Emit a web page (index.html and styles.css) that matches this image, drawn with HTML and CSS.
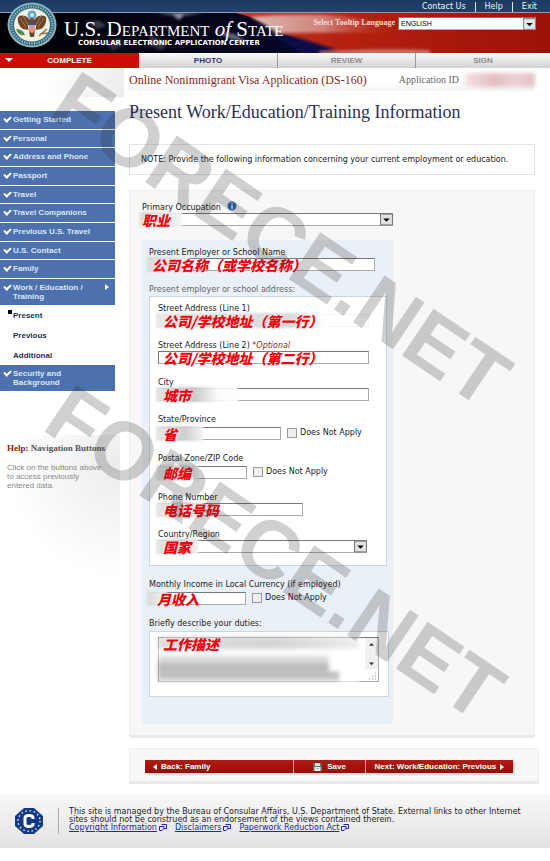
FILE: index.html
```html
<!DOCTYPE html>
<html lang="en">
<head>
<meta charset="utf-8">
<title>Online Nonimmigrant Visa Application (DS-160)</title>
<link rel="stylesheet" href="styles.css">
</head>
<body>
<div class="page">
  <nav class="topbar">
    <a href="#">Contact Us</a><a href="#">Help</a><a href="#">Exit</a>
  </nav>
  <header class="banner">
    <svg class="banner-art" viewBox="0 0 550 40" preserveAspectRatio="none" aria-hidden="true">
      <defs>
        <linearGradient id="night" x1="0" x2="1"><stop offset="0" stop-color="#000004"/><stop offset=".35" stop-color="#050518"/><stop offset="1" stop-color="#0a0a50"/></linearGradient>
        <linearGradient id="stripe" x1="0" x2="1"><stop offset="0" stop-color="#c23a2c"/><stop offset=".35" stop-color="#b5200f"/><stop offset="1" stop-color="#9c1208"/></linearGradient>
        <linearGradient id="pale" x1="0" x2="1"><stop offset="0" stop-color="#d9b9b4"/><stop offset=".5" stop-color="#d08078"/><stop offset="1" stop-color="#b5200f" stop-opacity="0"/></linearGradient>
        <filter id="soft"><feGaussianBlur stdDeviation="1.5"/></filter>
      </defs>
      <rect width="550" height="40" fill="url(#night)"/>
      <g filter="url(#soft)" fill="#8f92a8">
        <path d="M155 0l18 2 6 5 5-5 20-2z"/><path d="M85 8l14 0 8 5-10 3z" opacity=".4"/>
        <path d="M215 18l20 3 14 9-18-4z" opacity=".7"/><path d="M150 22l18 8-6 7-14-5z" opacity=".35"/><path d="M105 28l16-3 3 8-12 5z" opacity=".3"/>
      </g>
      <path d="M236 0H550V40H340Q300 28 282 20Q262 6 236 0Z" fill="url(#stripe)"/>
      <g filter="url(#soft)">
        <path d="M250 4Q300 0 345 3L400 12V20Q340 19 276 20Q264 10 250 4Z" fill="url(#pale)"/>
        <path d="M276 20Q300 24 345 40H300Q286 30 270 20Z" fill="#0b0c48"/>
        <path d="M320 39Q370 35 430 37V41H320Z" fill="#c9776c"/>
      </g>
    </svg>
    <svg class="seal" viewBox="0 0 50 46" aria-hidden="true">
      <ellipse cx="25" cy="23" rx="24.500" ry="22.500" fill="#8fb3bd"/>
      <ellipse cx="25" cy="23" rx="22.500" ry="20.500" fill="#2f6d84"/>
      <ellipse cx="25" cy="23" rx="20.500" ry="18.500" fill="none" stroke="#bcd0cd" stroke-width="2" stroke-dasharray="1 1.500"/>
      <ellipse cx="25" cy="23" rx="18" ry="16.500" fill="#f1f0e4"/>
      <circle cx="25" cy="13" r="4.500" fill="#5ea6cf"/><circle cx="25" cy="13" r="2" fill="#e3edf0"/>
      <path d="M23 18Q17 11 11 15Q10 23 16 27L22 28L23 35H27L28 28L34 27Q40 23 39 15Q33 11 27 18L26 16H24Z" fill="#6d4526"/>
      <path d="M13 16L19 25M16 14L21 23M37 16L31 25M34 14L29 23" stroke="#a77d4b" stroke-width="1"/>
      <path d="M21 20H29V26Q28 30 25 31Q22 30 21 26Z" fill="#f4e6e2"/><path d="M21 20H29V23H21Z" fill="#344f87"/>
      <path d="M23 23V30M25 23V31M27 23V30" stroke="#c5453b" stroke-width="1"/>
      <path d="M9 27Q11 34 18 33Q16 27 9 27Z" fill="#4e8a4a"/><path d="M32 34L40 27M33 32L41 31" stroke="#8c7c55" stroke-width="1.500"/>
    </svg>
    <div class="brand">
      <h1>U.S. Department <em>of</em> State</h1>
      <p>CONSULAR ELECTRONIC APPLICATION CENTER</p>
    </div>
    <div class="language">
      <label for="lang">Select Tooltip Language</label>
      <span class="select">
        <select id="lang"><option>ENGLISH</option></select>
        <svg viewBox="0 0 12 11" aria-hidden="true"><rect x=".5" y=".5" width="11" height="10" fill="#e6e6e6" stroke="#888"/><path d="M3 4.500H9L6 7.500Z" fill="#000"/></svg>
      </span>
    </div>
  </header>
  <ol class="steps">
    <li class="current"><svg viewBox="0 0 8 4" aria-hidden="true"><path d="M0 0H8L4 4Z" fill="#fff"/></svg>COMPLETE</li>
    <li class="next">PHOTO</li><li>REVIEW</li><li>SIGN</li>
  </ol>

  <div class="columns">
    <aside class="sidebar">
      <div class="fade"></div>
      <ul class="menu">
        <li><a href="#">Getting Started</a></li>
        <li><a href="#">Personal</a></li>
        <li><a href="#">Address and Phone</a></li>
        <li><a href="#">Passport</a></li>
        <li><a href="#">Travel</a></li>
        <li><a href="#">Travel Companions</a></li>
        <li><a href="#">Previous U.S. Travel</a></li>
        <li><a href="#">U.S. Contact</a></li>
        <li><a href="#">Family</a></li>
      </ul>
      <div class="menu wide"><a href="#" class="open">Work / Education / Training</a></div>
      <ul class="submenu">
        <li class="here"><a href="#">Present</a></li>
        <li><a href="#">Previous</a></li>
        <li><a href="#">Additional</a></li>
      </ul>
      <div class="menu wide"><a href="#">Security and Background</a></div>
      <section class="help">
        <h3><b>Help:</b> Navigation Buttons</h3>
        <p>Click on the buttons above to access previously entered data.</p>
      </section>
    </aside>

    <main>
      <div class="appbar">
        <h2>Online Nonimmigrant Visa Application (DS-160)</h2>
        <span>Application ID</span><i class="hidden-id"></i>
      </div>
      <h2 class="title">Present Work/Education/Training Information</h2>
      <p class="note">NOTE: Provide the following information concerning your current employment or education.</p>

      <form id="work" class="panel">
        <div class="field">
          <label for="occ">Primary Occupation</label>
          <svg class="info" viewBox="0 0 10 10" aria-hidden="true"><circle cx="5" cy="5" r="5" fill="#9dbbe0"/><circle cx="5" cy="5" r="4" fill="#2c62b4"/><path d="M5 4.300V8M5 2V3.300" stroke="#fff" stroke-width="1.400"/></svg>
          <div class="control select full">
            <select id="occ"><option></option></select>
            <svg viewBox="0 0 12 11" aria-hidden="true"><rect x=".5" y=".5" width="11" height="10" fill="#e2e2e2" stroke="#777"/><path d="M3 4.500H9L6 7.500Z" fill="#000"/></svg>
            <i class="smudge pale w40"></i><span class="mark edge">职业</span>
          </div>
        </div>

        <div class="block">
          <div class="field">
            <label for="emp">Present Employer or School Name</label>
            <div class="control"><input id="emp" class="w226" type="text"><i class="smudge pale w40"></i><span class="mark near">公司名称（或学校名称）</span></div>
          </div>
          <p class="legend">Present employer or school address:</p>
          <div class="address">
            <div class="field">
              <label for="s1">Street Address (Line 1)</label>
              <div class="control"><input id="s1" class="w211 covered" type="text"><i class="smudge w160"></i><span class="mark">公司/学校地址（第一行）</span></div>
            </div>
            <div class="field">
              <label for="s2">Street Address (Line 2) <em>*Optional</em></label>
              <div class="control"><input id="s2" class="w211" type="text"><span class="mark">公司/学校地址（第二行）</span></div>
            </div>
            <div class="field">
              <label for="city">City</label>
              <div class="control"><input id="city" class="w211" type="text"><i class="smudge w80"></i><span class="mark">城市</span></div>
            </div>
            <div class="field">
              <label for="state">State/Province</label>
              <div class="control row"><input id="state" class="w123" type="text"><i class="smudge w45"></i><span class="mark">省</span>
                <label class="tick"><input type="checkbox">Does Not Apply</label></div>
            </div>
            <div class="field">
              <label for="zip">Postal Zone/ZIP Code</label>
              <div class="control row"><input id="zip" class="w89" type="text"><i class="smudge w40"></i><span class="mark">邮编</span>
                <label class="tick"><input type="checkbox">Does Not Apply</label></div>
            </div>
            <div class="field">
              <label for="phone">Phone Number</label>
              <div class="control"><input id="phone" class="w145" type="text"><i class="smudge w45"></i><span class="mark">电话号码</span></div>
            </div>
            <div class="field">
              <label for="country">Country/Region</label>
              <div class="control select w209">
                <select id="country"><option></option></select>
                <svg viewBox="0 0 12 11" aria-hidden="true"><rect x=".5" y=".5" width="11" height="10" fill="#e2e2e2" stroke="#777"/><path d="M3 4.500H9L6 7.500Z" fill="#000"/></svg>
                <i class="smudge w40"></i><span class="mark">国家</span>
              </div>
            </div>
          </div>
          <div class="field">
            <label for="income">Monthly Income in Local Currency (if employed)</label>
            <div class="control row"><input id="income" class="w97" type="text"><i class="smudge pale w20"></i><span class="mark far">月收入</span>
              <label class="tick"><input type="checkbox">Does Not Apply</label></div>
          </div>
          <label for="duties">Briefly describe your duties:</label>
          <div class="duties">
            <div class="control">
              <textarea id="duties"></textarea>
              <div class="hidden-text"><i></i><i></i><i></i></div>
              <svg class="scroll" viewBox="0 0 13 44" aria-hidden="true"><rect width="13" height="32" fill="#f0f0f0"/><path d="M4 8L6.500 5L9 8ZM4 25H9L6.500 28Z" fill="#333"/><path d="M10 36h1M7 39h1M10 39h1M4 42h1M7 42h1M10 42h1" stroke="#999"/></svg>
              <span class="mark">工作描述</span>
            </div>
          </div>
        </div>
      </form>

      <div class="actions">
        <div class="bar">
          <button type="button" class="back"><svg viewBox="0 0 4 6" aria-hidden="true"><path d="M4 0V6L0 3Z" fill="#fff"/></svg>Back: Family</button>
          <button type="submit" form="work" class="save"><svg viewBox="0 0 9 8" aria-hidden="true"><path d="M0 0H8L9 1V8H0Z" fill="#5d6c68"/><rect x="2" width="5" height="3" fill="#d7e6dc"/><rect x="1.500" y="4" width="6" height="4" fill="#f3f3f3"/><path d="M3 5.500H6" stroke="#888" stroke-width=".7"/></svg>Save</button>
          <button type="button" class="forward">Next: Work/Education: Previous<svg viewBox="0 0 4 6" aria-hidden="true"><path d="M0 0V6L4 3Z" fill="#fff"/></svg></button>
        </div>
      </div>
    </main>
  </div>

  <footer>
    <svg class="emblem" viewBox="0 0 28 26" aria-hidden="true">
      <path d="M9 0H19L28 8V18L19 26H9L0 18V8Z" fill="#143a84"/>
      <ellipse cx="14" cy="13" rx="11" ry="10.300" fill="none" stroke="#d5def0" stroke-width="1.500" stroke-dasharray="1.500 2.700"/>
      <path d="M18 11V10Q18 7.500 14 7.500Q10 7.500 10 10V16Q10 18.500 14 18.500Q18 18.500 18 16V15" fill="none" stroke="#fff" stroke-width="3"/>
    </svg>
    <div class="legal">
      <p>This site is managed by the Bureau of Consular Affairs, U.S. Department of State. External links to other Internet sites should not be construed as an endorsement of the views contained therein.</p>
      <p class="links">
        <a href="#">Copyright Information<svg viewBox="0 0 8 7"><path d="M2.500 .5H7.500V4.500H5L3 6.500H.5V2.500H5V5" fill="none" stroke="#22b"/></svg></a>
        <a href="#">Disclaimers<svg viewBox="0 0 8 7"><path d="M2.500 .5H7.500V4.500H5L3 6.500H.5V2.500H5V5" fill="none" stroke="#22b"/></svg></a>
        <a href="#">Paperwork Reduction Act<svg viewBox="0 0 8 7"><path d="M2.500 .5H7.500V4.500H5L3 6.500H.5V2.500H5V5" fill="none" stroke="#22b"/></svg></a>
      </p>
    </div>
  </footer>
  <div class="watermark upper" aria-hidden="true">FORECE.NET</div>
  <div class="watermark lower" aria-hidden="true">FORECE.NET</div>
</div>
</body>
</html>
```
FILE: styles.css
```css
* { box-sizing: border-box; }
body {
  margin: 0;
  background: #fff;
  color: #222;
  font: 8px/10px "DejaVu Sans", sans-serif;
}
h1, h2, h3, p, ul, ol { margin: 0; padding: 0; list-style: none; }
svg { display: block; }
input, select, textarea, button { font: inherit; margin: 0; border-radius: 0; }
.page { position: relative; overflow: hidden; }

/* top of page */
.topbar {
  display: flex;
  justify-content: flex-end;
  height: 13px;
  padding: 2px 4px 0 0;
  background: linear-gradient(#1d3a63, #24406b);
  border-bottom: 1px solid #8d9bb0;
}
.topbar a { color: #f0f4fa; text-decoration: none; padding: 0 9px; line-height: 10px; }
.topbar a + a { border-left: 1px solid #e0e5ee; }
.banner {
  position: relative;
  display: flex;
  justify-content: space-between;
  align-items: flex-start;
  height: 40px;
  background: #000;
}
.banner-art { position: absolute; inset: 0; width: 100%; height: 100%; }
.seal { position: absolute; left: 7px; top: -11px; width: 50px; height: 46px; }
.brand { position: relative; padding: 6px 0 0 64px; color: #fff; white-space: nowrap; }
.brand h1 { font: 400 21px/20px "Liberation Serif", serif; font-variant: small-caps; }
.brand h1 em { font-variant: normal; }
.brand p { padding-left: 14px; font: 700 7px/8px "DejaVu Sans", sans-serif; }
.language {
  position: relative;
  display: flex;
  gap: 3px;
  padding: 4px 14px 0 0;
  color: #f6dcd6;
  white-space: nowrap;
}
.language label { font: 700 8px/12px "Liberation Serif", serif; }
.language .select { width: 138px; }
.language select { height: 14px; padding: 0 2px 3px; border-color: #888; font: 7px/9px "Liberation Sans", sans-serif; }
.language .select svg { height: 14px; }

.steps {
  display: grid;
  grid-template-columns: 139fr 139fr 138fr 134fr;
  height: 15px;
  background: linear-gradient(#fafafa, #d2d2d2);
  font: 700 8px/15px "Liberation Sans", sans-serif;
  color: #8c8c8c;
  text-align: center;
}
.steps li { position: relative; border-right: 1px solid #999; }
.steps li:last-child { border-right: 0; }
.steps .current { background: #cc0d06; color: #fff; border-right: 0; }
.steps .next { color: #2b376b; }
.steps svg { position: absolute; left: 5px; top: 5px; width: 8px; height: 4px; }

/* sidebar */
.columns { display: grid; grid-template-columns: 124px 1fr; }
.sidebar { font: 700 8px/9px "Liberation Sans", sans-serif; }
.fade { height: 29px; margin-bottom: 14px; background: linear-gradient(100deg, #fff 40%, #ececec); }
.menu { margin-right: 9px; }
ul.menu { display: grid; grid-auto-rows: 1fr; gap: 1px; min-height: 167px; margin-bottom: 1px; }
.menu li { display: grid; }
.menu a {
  position: relative;
  display: block;
  padding: 4px 24px 4px 13px;
  background: #4c71ae;
  color: #dce6f5;
  text-decoration: none;
}
ul.menu a { padding-right: 0; }
.menu a::before {
  content: "";
  position: absolute;
  left: 4px;
  top: 5px;
  width: 5px;
  height: 3px;
  border: solid #fff;
  border-width: 0 0 2px 2px;
  transform: rotate(-45deg);
}
.menu .open::after {
  content: "";
  position: absolute;
  right: 6px;
  top: 5px;
  border: solid transparent;
  border-width: 3px 0 3px 4px;
  border-left-color: #fff;
}
.submenu { margin-right: 9px; }
.submenu li { position: relative; padding: 6px 0 5px 13px; }
.submenu a { color: #253058; text-decoration: none; }
.submenu .here::before { content: ""; position: absolute; left: 8px; top: 5px; width: 4px; height: 4px; background: #000; }
.help {
  margin: 44px 4px 0 0;
  padding: 8px 14px 100px 7px;
  background: radial-gradient(circle at 100% 20%, #ececec, #fff 65%);
}
.help h3 { font: 700 9px/10px "Liberation Serif", serif; color: #555; padding-bottom: 10px; white-space: nowrap; }
.help b { color: #8c1a14; }
.help p { font-weight: 400; color: #888; }

/* main column */
main { padding: 0 15px 0 5px; min-width: 0; }
.appbar {
  display: flex;
  align-items: center;
  height: 23px;
  color: #666;
  font: 10px/12px "Liberation Serif", serif;
  background: linear-gradient(#fff 60%, #f5f5f5);
}
.appbar h2 { flex: 1; font: 400 12px/14px "Liberation Serif", serif; color: #8c2418; white-space: nowrap; }
.hidden-id { width: 70px; height: 14px; margin-left: 6px; background: linear-gradient(90deg, #f5e3e4, #e3bcc0 40%, #edd0d3 70%, #e5bfc3); filter: blur(2px); }
.title { padding: 11px 0 22px; font: 400 18px/20px "Liberation Serif", serif; color: #2a3157; white-space: nowrap; }
.note { padding: 10px 0 9px 11px; border: 1px solid #e4e4e4; white-space: nowrap; }
.panel {
  margin-top: 15px;
  padding: 12px 12px 11px;
  background: #f7f7f7;
  border: 1px solid #efefef;
  border-bottom: 3px solid #e9e9e9;
}
.panel > .field { width: 66%; position: relative; }
.info { position: absolute; left: 85px; top: -2px; width: 10px; height: 10px; }
.field { margin-bottom: 14px; }
.field label, .block > label { display: block; width: max-content; }
.field em { color: #8c2a20; }
.control { position: relative; min-height: 13px; }
.control > input, .select select, textarea {
  display: block;
  height: 13px;
  padding: 0 2px;
  border: 1px solid #999;
  border-color: #777 #aaa #aaa #777;
  background: #fff;
}
.select { position: relative; display: block; }
.select select { width: 100%; appearance: none; }
.select svg { position: absolute; right: 0; top: 0; width: 13px; height: 13px; }
.full { width: 100%; }
.w226 { width: 226px; }
.w211 { width: 211px; }
.w209 { width: 209px; }
.w145 { width: 145px; }
.w123 { width: 123px; }
.w97 { width: 97px; }
.w89 { width: 89px; }
.control > .covered { border-color: #f4f4f4; }
.row { display: flex; align-items: flex-start; gap: 6px; padding-top: 2px; }
.field .tick { display: flex; align-items: center; gap: 3px; height: 11px; }
.tick input { appearance: none; width: 10px; height: 10px; border: 1px solid #999; background: #eee; }

.block { width: 66%; padding: 8px 4px 27px 7px; background: #e9f0f7; }
.legend { color: #666; margin-bottom: 1px; }
.address { margin: 0 2px 14px 0; padding: 7px 8px 12px; background: #fff; border: 1px solid #c9d6e2; }
.address .field:last-child { margin-bottom: 0; }
.duties { margin-top: 2px; padding: 5px 9px 14px 8px; background: #fff; border: 1px solid #c9d6e2; }
textarea { width: 100%; resize: none; }
.duties textarea { height: 45px; }
.scroll { position: absolute; right: 1px; top: 1px; width: 13px; height: 43px; }

/* obscured answers and the red annotations over them */
.smudge {
  position: absolute;
  left: -2px;
  bottom: -1px;
  height: 15px;
  background: linear-gradient(90deg, #e8e8e8, #cecece 60%, #f4f4f4);
  filter: blur(1px);
}
.smudge.pale { background: linear-gradient(90deg, #dcdcdc, #f2f2f2); }
.w20 { width: 20px; }
.w40 { width: 42px; }
.w45 { width: 47px; }
.w80 { width: 82px; background: linear-gradient(90deg, #e4e4e4, #c8c8c8 45%, #fafafa 75%, #fff); }
.w160 { width: 168px; background: linear-gradient(90deg, #e8e8e8, #dadada 80%, #fff); }
.mark {
  position: absolute;
  left: 5px;
  bottom: -2px;
  color: #f0000c;
  font: italic 900 14px/16px "Noto Sans CJK SC", sans-serif;
  white-space: nowrap;
  text-shadow: 0 0 2px #fff;
}
.mark.edge { left: 0; }
.mark.near { left: 3px; }
.mark.far { left: 8px; }
.duties .mark { bottom: auto; top: -1px; }
.hidden-text { position: absolute; inset: 0 20px 0 0; display: grid; align-content: start; gap: 1px; background: #fff; filter: blur(2px); }
.hidden-text i { height: 12px; background: linear-gradient(90deg, #ddd, #d4d4d4 60%, #eee); }
.hidden-text i:nth-child(2) { width: 85%; height: 16px; margin-top: 5px; background: linear-gradient(#eee, #aaa); }
.hidden-text i:nth-child(3) { width: 90%; height: 10px; background: linear-gradient(#aaa, #e2e2e2); }

/* page buttons */
.actions { margin: 10px -4px 11px 0; padding: 11px 25px 8px 15px; background: #f7f7f7; border: 1px solid #f0f0f0; border-bottom: 3px solid #e9e9e9; }
.bar { display: grid; grid-template-columns: 149fr 71fr 148fr; gap: 1px; background: #e9b5b0; box-shadow: 2px 2px 1px #ddd; }
.bar button {
  display: flex;
  align-items: center;
  height: 13px;
  padding: 0 8px;
  border: 0;
  background: linear-gradient(#b01c14, #980c08);
  color: #fff;
  font: 700 8px/10px "Liberation Sans", sans-serif;
  white-space: nowrap;
}
.bar svg { width: 4px; height: 6px; flex: none; }
.bar .back { gap: 4px; }
.bar .save { justify-content: center; gap: 5px; }
.bar .save svg { width: 9px; height: 8px; }
.bar .forward { justify-content: center; gap: 4px; }

footer {
  display: flex;
  gap: 15px;
  margin-bottom: 14px;
  padding: 13px 15px 14px;
  background: linear-gradient(#f7f7f7, #e3e3e3);
}
.emblem { width: 28px; height: 26px; flex: none; }
.legal { flex: 1; padding-left: 10px; border-left: 1px solid #aaa; line-height: 8px; }
.links { display: flex; gap: 8px; }
.links a { display: flex; gap: 2px; color: #22b; }
.links svg { width: 8px; height: 7px; }

.watermark {
  position: absolute;
  color: rgba(40, 40, 40, .22);
  font: 700 82px/80px "Liberation Sans", sans-serif;
  transform: translate(-50%, -50%) rotate(34deg);
  pointer-events: none;
}
.upper { left: 51%; top: 240px; }
.lower { left: 50%; top: 553px; }
```
